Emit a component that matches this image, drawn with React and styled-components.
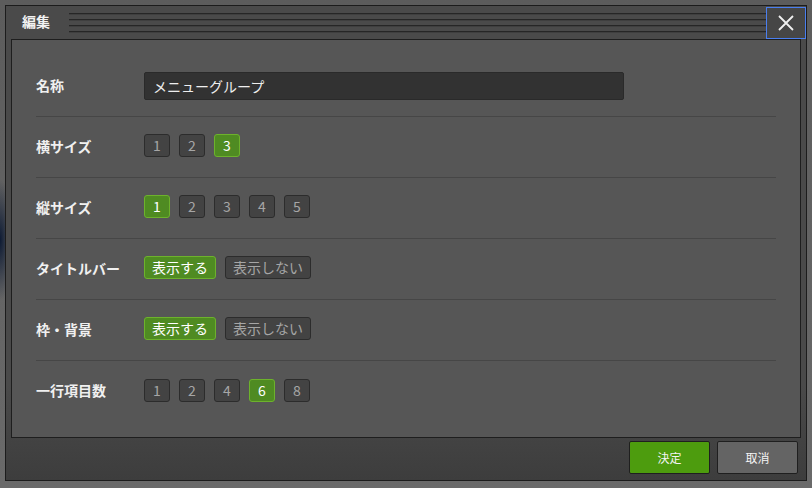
import React, { useState } from "react";
import styled, { createGlobalStyle } from "styled-components";

const GlobalStyle = createGlobalStyle`
  html, body {
    margin: 0;
    padding: 0;
    background: #676767;
  }
  body {
    font-family: "Noto Sans CJK JP", "Liberation Sans", sans-serif;
  }
`;

const Page = styled.div`
  width: 812px;
  height: 488px;
  box-sizing: border-box;
  padding: 5px 0 0 5px;
  background:
    radial-gradient(ellipse 14px 60px at 0px 240px, #0d1a33 0%, rgba(13, 26, 51, 0) 100%),
    linear-gradient(180deg, #5c5c5c 0%, #6a6a6a 100%);
`;

const Dialog = styled.div`
  width: 802px;
  height: 476px;
  box-sizing: border-box;
  border: 1px solid #1c1c1c;
  background: linear-gradient(180deg, #4a4a4a 0%, #4a4a4a 80%, #3d3d3d 100%);
  display: flex;
  flex-direction: column;
`;

const TitleBar = styled.div`
  height: 33px;
  display: flex;
  align-items: flex-start;
`;

const Title = styled.div`
  width: 63px;
  padding: 6px 0 0 16px;
  box-sizing: border-box;
  color: #f2f2f2;
  font-weight: bold;
  font-size: 14px;
  line-height: 18px;
`;

const Stripes = styled.div`
  flex: 1;
  margin-top: 7px;
  height: 20px;
  background: repeating-linear-gradient(
    180deg,
    #262626 0px,
    #262626 1px,
    #3f3f3f 1px,
    #3f3f3f 2px,
    transparent 2px,
    transparent 6px
  );
`;

const CloseButton = styled.button`
  width: 40px;
  height: 32px;
  margin-top: 1px;
  box-sizing: border-box;
  border: 1px solid #4a7ff0;
  background: #464646;
  padding: 0;
  display: flex;
  align-items: center;
  justify-content: center;
  cursor: pointer;
`;

const Panel = styled.div`
  margin: 0 5px;
  height: 399px;
  box-sizing: border-box;
  border: 1px solid #1e1e1e;
  background: #565656;
  padding: 16px 24px 0 24px;
`;

const Row = styled.div`
  height: 61px;
  box-sizing: border-box;
  display: flex;
  align-items: center;
  border-bottom: ${(p) => (p.$last ? "none" : "1px solid #464646")};
  padding-bottom: 3px;
`;

const Label = styled.div`
  width: 108px;
  flex-shrink: 0;
  color: #f0f0f0;
  font-weight: bold;
  font-size: 14px;
`;

const TextInput = styled.input`
  width: 480px;
  height: 28px;
  margin-top: 2px;
  box-sizing: border-box;
  background: #323232;
  border: 1px solid #2a2a2a;
  border-radius: 2px;
  color: #eeeeee;
  font-family: "Noto Sans CJK JP", "Liberation Sans", sans-serif;
  font-size: 14px;
  padding: 0 8px;
  outline: none;
`;

const Options = styled.div`
  display: flex;
  gap: 9px;
`;

const Option = styled.button`
  height: 23px;
  min-width: ${(p) => (p.$wide ? "auto" : "26px")};
  padding: ${(p) => (p.$wide ? "0 7px" : "0")};
  box-sizing: border-box;
  border-radius: 3px;
  border: 1px solid ${(p) => (p.$on ? "#6db22c" : "#2c2c2c")};
  background: ${(p) => (p.$on ? "#4f8b22" : "#434343")};
  color: ${(p) => (p.$on ? "#ffffff" : "#a6a6a6")};
  font-family: "Noto Sans CJK JP", "Liberation Sans", sans-serif;
  font-size: 14px;
  line-height: 21px;
  cursor: pointer;
`;

const Footer = styled.div`
  flex: 1;
  display: flex;
  justify-content: flex-end;
  align-items: flex-start;
  gap: 7px;
  padding: 3px 8px 0 0;
`;

const FooterButton = styled.button`
  width: 81px;
  height: 33px;
  box-sizing: border-box;
  border-radius: 2px;
  border: 1px solid #1f1f1f;
  background: ${(p) => (p.$primary ? "#4d9c0e" : "#646464")};
  color: #f4f4f4;
  font-family: "Noto Sans CJK JP", "Liberation Sans", sans-serif;
  font-size: 12px;
  cursor: pointer;
`;

const NumberChoice = ({ values, selected, onPick }) => (
  <Options>
    {values.map((v) => (
      <Option key={v} $on={v === selected} onClick={() => onPick(v)}>
        {v}
      </Option>
    ))}
  </Options>
);

const ShowChoice = ({ selected, onPick }) => (
  <Options>
    <Option $wide $on={selected} onClick={() => onPick(true)}>
      表示する
    </Option>
    <Option $wide $on={!selected} onClick={() => onPick(false)}>
      表示しない
    </Option>
  </Options>
);

export default function App() {
  const [name, setName] = useState("メニューグループ");
  const [w, setW] = useState(3);
  const [h, setH] = useState(1);
  const [titleBar, setTitleBar] = useState(true);
  const [frame, setFrame] = useState(true);
  const [perRow, setPerRow] = useState(6);

  return (
    <>
      <GlobalStyle />
      <Page>
        <Dialog>
          <TitleBar>
            <Title>編集</Title>
            <Stripes />
            <CloseButton aria-label="close">
              <svg width="16" height="16" viewBox="0 0 16 16">
                <path d="M1 1 L15 15 M15 1 L1 15" stroke="#f0f0f0" strokeWidth="1.8" />
              </svg>
            </CloseButton>
          </TitleBar>
          <Panel>
            <Row>
              <Label>名称</Label>
              <TextInput value={name} onChange={(e) => setName(e.target.value)} />
            </Row>
            <Row>
              <Label>横サイズ</Label>
              <NumberChoice values={[1, 2, 3]} selected={w} onPick={setW} />
            </Row>
            <Row>
              <Label>縦サイズ</Label>
              <NumberChoice values={[1, 2, 3, 4, 5]} selected={h} onPick={setH} />
            </Row>
            <Row>
              <Label>タイトルバー</Label>
              <ShowChoice selected={titleBar} onPick={setTitleBar} />
            </Row>
            <Row>
              <Label>枠・背景</Label>
              <ShowChoice selected={frame} onPick={setFrame} />
            </Row>
            <Row $last>
              <Label>一行項目数</Label>
              <NumberChoice values={[1, 2, 4, 6, 8]} selected={perRow} onPick={setPerRow} />
            </Row>
          </Panel>
          <Footer>
            <FooterButton $primary>決定</FooterButton>
            <FooterButton>取消</FooterButton>
          </Footer>
        </Dialog>
      </Page>
    </>
  );
}
